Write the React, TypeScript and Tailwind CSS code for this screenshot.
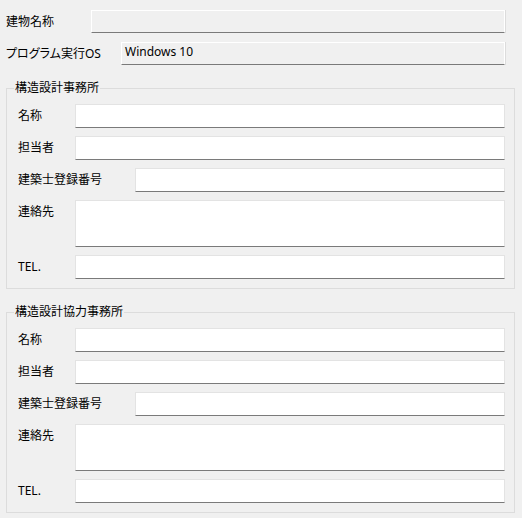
import React from "react";

const font = "font-['Noto_Sans','Noto_Sans_CJK_JP',sans-serif] [font-feature-settings:'palt']";

const Box: React.FC<{ className?: string }> = ({ className = "" }) => (
  <div className={`flex-1 h-full bg-white border border-[#e3e3e3] border-b-[#7a7a7a] ${className}`} />
);

const Row: React.FC<{ label: string; labelW: string; tall?: boolean }> = ({ label, labelW, tall }) => (
  <div className={`flex ${tall ? "h-[47px] items-start" : "h-[24px] items-center"}`}>
    <div className={`${labelW} shrink-0 leading-[16px] ${tall ? "pt-[4px]" : ""}`}>{label}</div>
    <Box />
  </div>
);

const Office: React.FC<{ title: string; className?: string }> = ({ title, className = "" }) => (
  <fieldset className={`border border-[#dcdcdc] ${className}`}>
    <legend className="ml-[7px] px-[1px] leading-[16px]">{title}</legend>
    <div className="flex flex-col gap-[8px] pt-[8px] pb-[9px] pl-[11px] pr-[9px]">
      <Row label="名称" labelW="w-[57px]" />
      <Row label="担当者" labelW="w-[57px]" />
      <Row label="建築士登録番号" labelW="w-[117px]" />
      <Row label="連絡先" labelW="w-[57px]" tall />
      <Row label="TEL." labelW="w-[57px]" />
    </div>
  </fieldset>
);

const App: React.FC = () => {
  return (
    <div className={`w-[522px] h-[518px] bg-[#f0f0f0] pl-[6px] pr-[7px] pt-[10px] text-[12px] text-black ${font}`}>
      <div className="flex items-center h-[23px] pr-[10px]">
        <div className="w-[85px] shrink-0 leading-[16px]">建物名称</div>
        <div className="flex-1 h-full bg-[#f0f0f0] border border-white border-b-[#7a7a7a] shadow-[1px_0_0_#dcdcdc]" />
      </div>
      <div className="flex items-center h-[23px] pr-[10px] mt-[9px]">
        <div className="w-[115px] shrink-0 leading-[16px]">プログラム実行OS</div>
        <div className="flex-1 h-full bg-[#f0f0f0] border border-white border-b-[#7a7a7a] shadow-[1px_0_0_#dcdcdc] pl-[3px] pt-[1px] leading-[16px]">
          Windows 10
        </div>
      </div>
      <Office title="構造設計事務所" className="mt-[15px]" />
      <Office title="構造設計協力事務所" className="mt-[15px]" />
    </div>
  );
};

export default App;
